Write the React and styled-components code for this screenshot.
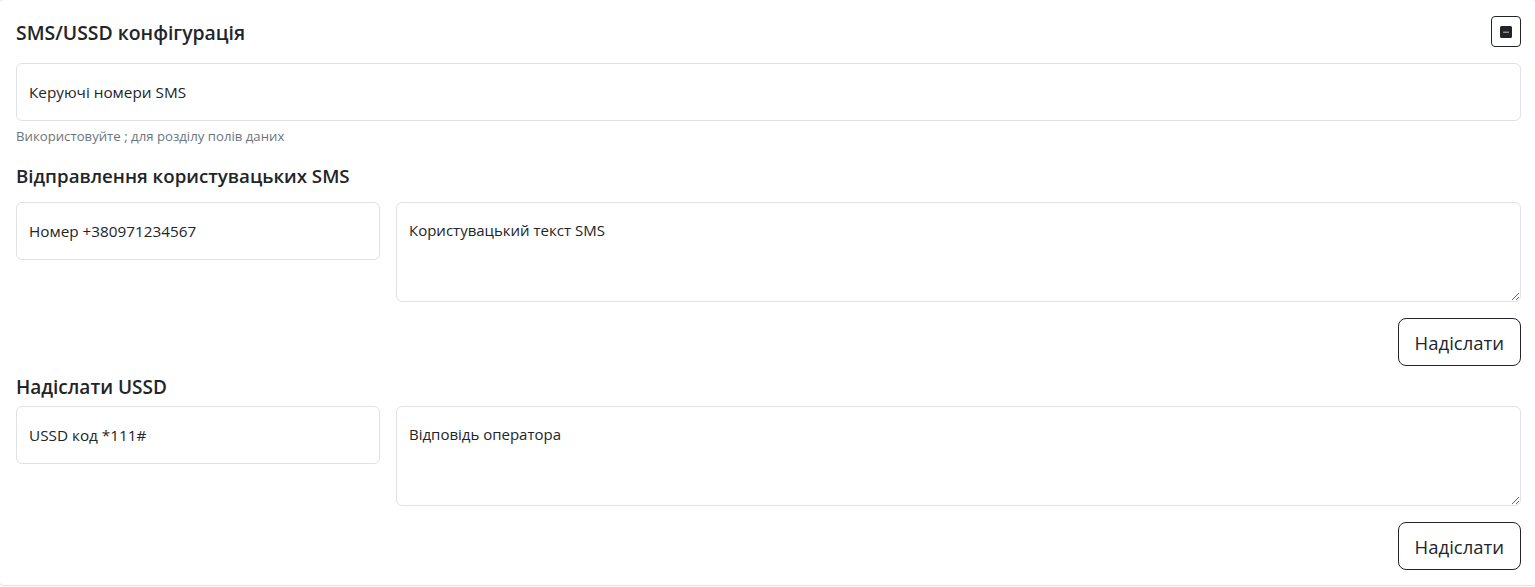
import React from "react";
import styled, { createGlobalStyle } from "styled-components";

const GlobalStyle = createGlobalStyle`
  html, body {
    margin: 0;
    padding: 0;
    background: #ffffff;
    overflow: hidden;
  }
  body {
    font-family: "Open Sans", "Noto Sans", "Liberation Sans", sans-serif;
    color: #212529;
    font-size: 15px;
  }
  * { box-sizing: border-box; }
`;

const Card = styled.section`
  margin: -1px -3px 0 -2px;
  border: 1px solid #dee2e6;
  border-radius: 6px;
  background: #fff;
`;

const CardBody = styled.div`
  padding: 16px 16px 15px 17px;
  display: flex;
  flex-direction: column;
`;

const HeaderRow = styled.div`
  display: flex;
  align-items: center;
  justify-content: space-between;
`;

const Title = styled.h5`
  margin: ${(p) => p.$mt || 0}px 0 ${(p) => p.$mb || 0}px;
  padding-top: ${(p) => p.$pt || 0}px;
  font-size: ${(p) => p.$size || 19}px;
  line-height: 24px;
  font-weight: 600;
  color: #212529;
`;

const ToggleButton = styled.button`
  width: 30px;
  height: 31px;
  padding: 0;
  display: flex;
  align-items: center;
  justify-content: center;
  background: transparent;
  border: 1px solid #212529;
  border-radius: 4px;
  color: #212529;
  cursor: pointer;
`;

const Field = styled.input`
  width: 100%;
  height: 58px;
  margin-top: ${(p) => p.$mt || 0}px;
  padding: 16px 12px;
  font: inherit;
  font-size: 15.3px;
  color: #212529;
  border: 1px solid #dee2e6;
  border-radius: 6px;
  outline: none;
  &::placeholder {
    color: #212529;
    opacity: 1;
  }
`;

const Area = styled.textarea`
  width: 100%;
  height: 100px;
  padding: 17px 12px;
  font: inherit;
  font-size: 15px;
  line-height: 21px;
  color: #212529;
  border: 1px solid #dee2e6;
  border-radius: 6px;
  outline: none;
  resize: vertical;
  display: block;
  &::placeholder {
    color: #212529;
    opacity: 1;
  }
`;

const HelpText = styled.div`
  margin-top: 6px;
  font-size: 13.2px;
  line-height: 18px;
  color: #6c757d;
`;

const Row = styled.div`
  display: grid;
  grid-template-columns: 364px 1fr;
  gap: 16px;
  align-items: start;
`;

const Actions = styled.div`
  display: flex;
  justify-content: flex-end;
  margin-top: 16px;
`;

const SendButton = styled.button`
  height: 48px;
  padding: 0 16px;
  font: inherit;
  font-size: 18.5px;
  color: #212529;
  background: transparent;
  border: 1px solid #212529;
  border-radius: 8px;
  cursor: pointer;
`;

const DashSquare = () => (
  <svg width="12" height="12" viewBox="0 0 16 16" fill="#212529" aria-hidden="true">
    <path d="M2 0a2 2 0 0 0-2 2v12a2 2 0 0 0 2 2h12a2 2 0 0 0 2-2V2a2 2 0 0 0-2-2H2zm2.5 7.5h7a.5.5 0 0 1 0 1h-7a.5.5 0 0 1 0-1z" />
  </svg>
);

export default function App() {
  return (
    <>
      <GlobalStyle />
      <Card>
        <CardBody>
          <HeaderRow>
            <Title $pt={3} $size={19.4}>SMS/USSD конфігурація</Title>
            <ToggleButton aria-label="Згорнути">
              <DashSquare />
            </ToggleButton>
          </HeaderRow>

          <Field $mt={16} placeholder="Керуючі номери SMS" />
          <HelpText>Використовуйте ; для розділу полів даних</HelpText>

          <Title $mt={19} $mb={14} $size={18.7}>Відправлення користувацьких SMS</Title>
          <Row>
            <Field placeholder="Номер +380971234567" />
            <Area placeholder="Користувацький текст SMS" />
          </Row>
          <Actions>
            <SendButton>Надіслати</SendButton>
          </Actions>

          <Title $mt={9} $mb={7}>Надіслати USSD</Title>
          <Row>
            <Field placeholder="USSD код *111#" />
            <Area placeholder="Відповідь оператора" />
          </Row>
          <Actions>
            <SendButton>Надіслати</SendButton>
          </Actions>
        </CardBody>
      </Card>
    </>
  );
}
